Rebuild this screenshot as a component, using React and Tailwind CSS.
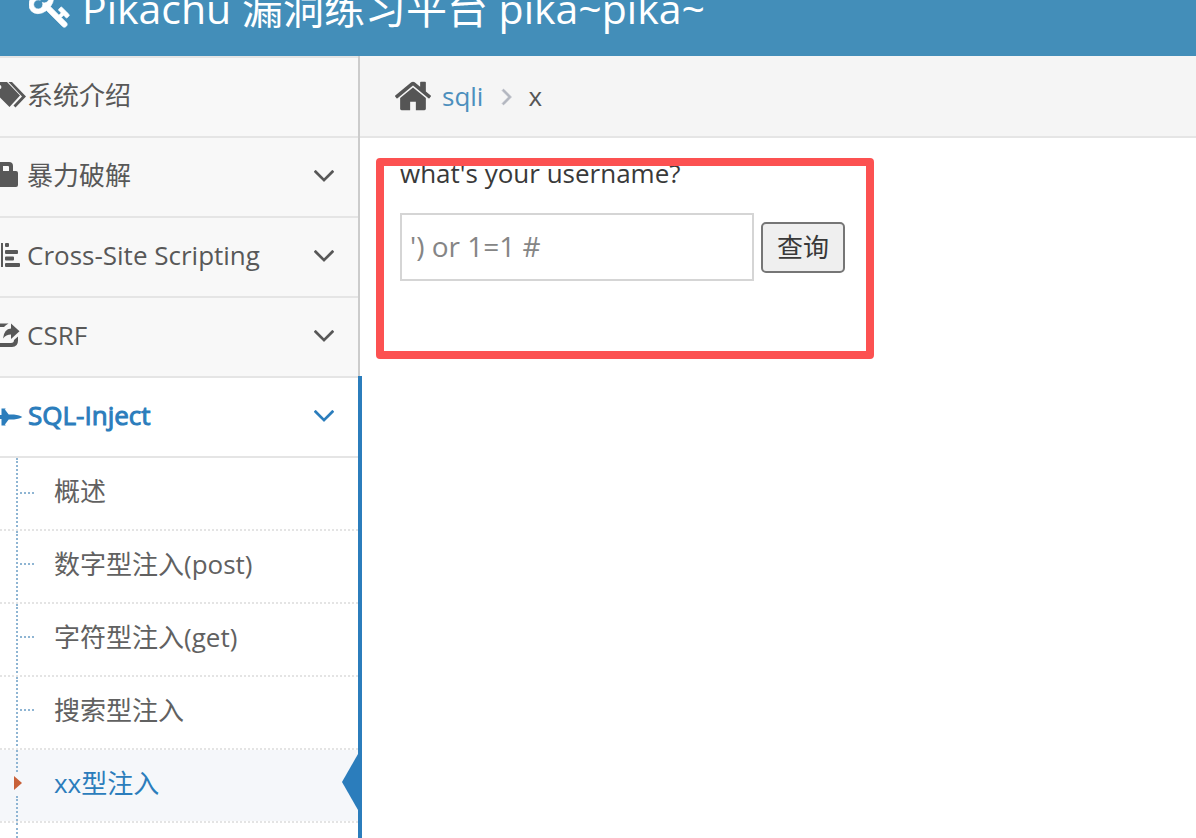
import clsx from 'clsx';

const menuItems = [
  { label: '系统介绍',             icon: 'tags'  },
  { label: '暴力破解',             icon: 'lock',  expandable: true },
  { label: 'Cross-Site Scripting', icon: 'align', expandable: true },
  { label: 'CSRF',                 icon: 'share', expandable: true },
  { label: 'SQL-Inject',           icon: 'plane', expandable: true, active: true },
];

const sqlItems = [
  { label: '概述' },
  { label: '数字型注入(post)' },
  { label: '字符型注入(get)' },
  { label: '搜索型注入' },
  { label: 'xx型注入', active: true },
];

/* ─── Menu glyphs, cut by the left edge of the window ─────────────────────── */
const glyphs = {
  tags: (
    <>
      <path fillRule="evenodd" d="M0 0h7l13 13.500L9.500 25 0 15.500zM-3 5a2.200 2.200 0 1 0 4.400 0a2.200 2.200 0 1 0-4.400 0z" />
      <path d="M8.500 0h3.500l14 14.500L15.500 25.500l-2-2 8.500-9z" />
    </>
  ),
  lock: <path fillRule="evenodd" d="M0 0h9q4 0 4 4v5h3q2 0 2 2v12q0 2-2 2H0zM3 4v5h6V5q0-1-1-1z" />,
  align: (
    <path d="M1 1h2v24H1zM6 1h2q1 0 1 1v2q0 1-1 1H6q-1 0-1-1V2q0-1 1-1zM6 8h11q1 0 1 1v2q0 1-1 1H6q-1 0-1-1V9q0-1 1-1zM6 14.500h7q1 0 1 1v2q0 1-1 1H6q-1 0-1-1v-2q0-1 1-1zM6 21h13q1 0 1 1v2q0 1-1 1H6q-1 0-1-1v-2q0-1 1-1z" />
  ),
  share: (
    <>
      <path d="M0 1.500h8.500q-3 1.500-4.500 3.500H0zM0 21h11q3 0 3-3l4-3.500v4q0 6.500-6 6.500H0z" />
      <path d="M11 1.500l8.500 7.700L11 17v-4.500q-5 0-8 4 1-9.500 8-10z" />
    </>
  ),
  plane: <path d="M1.500 6.500h4v.800h-.800l4 5.200h5.300q6 .7 8.300 2.500-2.300 1.800-8.300 2.500H8.700l-4 5.200h.8v.800h-4v-6.500H0v-4h1.500z" />,
};

const MenuGlyph = ({ name }) => (
  <svg viewBox="0 0 27 27" className="h-[27px] w-[27px] shrink-0 fill-current" aria-hidden="true">
    {glyphs[name]}
  </svg>
);

const AngleDown = () => (
  <svg viewBox="0 0 1792 1792" className="h-9 w-9 fill-current" aria-hidden="true">
    <path d="M1395 736q0 13-10 23l-466 466q-10 10-23 10t-23-10l-466-466q-10-10-10-23t10-23l50-50q10-10 23-10t23 10l393 393 393-393q10-10 23-10t23 10l50 50q10 10 10 23z" />
  </svg>
);

const AngleRight = () => (
  <svg viewBox="0 0 1792 1792" className="h-7 w-7 fill-[#b2b6bf] stroke-[#b2b6bf]" strokeWidth="40" aria-hidden="true">
    <path d="M1171 960q0 13-10 23l-466 466q-10 10-23 10t-23-10l-50-50q-10-10-10-23t10-23l393-393-393-393q-10-10-10-23t10-23l50-50q10-10 23-10t23 10l466 466q10 10 10 23z" />
  </svg>
);

const KeyIcon = () => (
  <svg viewBox="0 0 1792 1792" className="h-[43px] w-[43px] shrink-0 fill-white stroke-white" strokeWidth="30" aria-hidden="true">
    <path d="M832 512q0-80-56-136t-136-56-136 56-56 136q0 42 19 83-41-19-83-19-80 0-136 56t-56 136 56 136 136 56 136-56 56-136q0-42-19-83 41 19 83 19 80 0 136-56t56-136zm851 704q0 17-49 66t-66 49q-9 0-28.500-16t-36.500-33-38.500-40-24.500-26l-96 96 220 220q28 28 28 68 0 42-39 81t-81 39q-40 0-68-28l-671-671q-176 131-365 131-163 0-265.500-102.500t-102.500-265.500q0-160 95-313t248-248 313-95q163 0 265.500 102.500t102.500 265.500q0 189-131 365l355 355 96-96q-3-3-26-24.500t-40-38.500-33-36.500-16-28.500q0-17 49-66t66-49q13 0 23 10 6 6 46 44.500t82 79.500 86.500 86 73 78 28.500 41z" />
  </svg>
);

const HomeIcon = () => (
  <svg viewBox="0 0 1792 1792" className="h-10 w-10 fill-[#555]" aria-hidden="true">
    <path d="M1472 992v480q0 26-19 45t-45 19h-384v-384h-256v384h-384q-26 0-45-19t-19-45v-480q0-1 .5-3t.5-3l575-474 575 474q1 2 1 6zm223-69l-62 74q-8 9-21 11h-3q-13 0-21-7l-692-577-692 577q-12 8-24 7-13-2-21-11l-62-74q-8-10-7-23.500t11-21.500l719-599q32-26 76-26t76 26l244 204v-195q0-14 9-23t23-9h192q14 0 23 9t9 23v408l219 182q10 8 11 21.500t-7 23.500z" />
  </svg>
);

/* ─── Sidebar rows ────────────────────────────────────────────────────────── */
const MenuItem = ({ label, icon, expandable, active }) => (
  <a
    href="#"
    className={clsx(
      'flex h-20 items-center border-t-2 border-[#e5e5e5] pr-4 pb-1',
      active ? 'bg-white text-[#2b7dbc]' : 'bg-[#f8f8f8] text-[#585858]'
    )}
  >
    <MenuGlyph name={icon} />
    <span className={clsx('flex-1', active && 'pl-px [-webkit-text-stroke:1px]')}>{label}</span>
    {expandable && <AngleDown />}
  </a>
);

const SubItem = ({ label, active, first }) => (
  <li
    className={clsx(
      'relative border-t-2',
      first ? 'border-solid border-[#e5e5e5]' : 'border-dotted border-[#e4e4e4]'
    )}
  >
    <a
      href="#"
      className={clsx(
        'flex h-[71px] items-center pl-[54px] pb-1',
        active ? 'bg-[#f5f7fa] text-[#2b7dbc]' : 'bg-white text-[#616161]'
      )}
    >
      {label}
    </a>
    {active ? (
      <>
        <span className="absolute top-0 left-4 h-[22px] border-l-2 border-dotted border-[#8fb5d3]" />
        <span className="absolute bottom-0 left-4 h-[25px] border-l-2 border-dotted border-[#8fb5d3]" />
        <svg viewBox="0 0 8 14" className="absolute top-[26px] left-3.5 h-3.5 w-2 fill-[#c86139]" aria-hidden="true">
          <path d="M0 0l8 7-8 7z" />
        </svg>
        <svg viewBox="0 0 16 56" className="absolute top-1 right-0 h-14 w-4 fill-[#2b7dbc]" aria-hidden="true">
          <path d="M16 0v56L0 28z" />
        </svg>
      </>
    ) : (
      <>
        <span className="absolute -bottom-0.5 top-0 left-4 border-l-2 border-dotted border-[#8fb5d3]" />
        <span
          className={clsx(
            'absolute left-5 w-3.5 border-t-2 border-dotted border-[#8fb5d3]',
            first ? 'top-[34px]' : 'top-8'
          )}
        />
      </>
    )}
  </li>
);

const Sidebar = () => (
  <aside className="w-[360px] shrink-0 border-r-2 border-[#ccc]">
    <nav>
      <ul>
        {menuItems.map(({ label, icon, expandable, active }) => (
          <li key={label} className={clsx(active && 'relative')}>
            <MenuItem label={label} icon={icon} expandable={expandable} active={active} />
            {active && (
              <>
                <ul>
                  {sqlItems.map((item, i) => (
                    <SubItem key={item.label} label={item.label} active={item.active} first={i === 0} />
                  ))}
                  <li className="h-[17px] border-t-2 border-dotted border-[#e4e4e4] pl-4">
                    <span className="block h-full border-l-2 border-dotted border-[#8fb5d3]" />
                  </li>
                </ul>
                <span className="absolute inset-y-0 -right-1 w-1 bg-[#2b7dbc]" />
              </>
            )}
          </li>
        ))}
      </ul>
    </nav>
  </aside>
);

const Breadcrumbs = () => (
  <nav className="flex h-[82px] items-center border-b-2 border-[#e5e5e5] bg-[#f5f5f5] pl-[33px]">
    <HomeIcon />
    <a href="#" className="ml-[9px] text-[#4c8fbd]">sqli</a>
    <span className="ml-2.5 mr-[7px]"><AngleRight /></span>
    <span className="text-[#555]">x</span>
  </nav>
);

const QueryForm = () => (
  <form
    className="relative m-4 mt-5 h-[201px] w-[498px] px-6"
    onSubmit={(e) => e.preventDefault()}
  >
    <label htmlFor="username" className="block pb-[25px] leading-[30px] text-[#393939]">
      what's your username?
    </label>
    <div className="flex items-center gap-[7px]">
      <input
        id="username"
        name="name"
        type="text"
        defaultValue="') or 1=1 #"
        className="h-[68px] w-[354px] border-2 border-[#d5d5d5] px-2 pb-0.5 text-[28px] text-[#858585]"
      />
      <button
        type="submit"
        className="h-[51px] w-[84px] rounded-[5px] border-2 border-[#767676] bg-[#efefef] text-[#393939]"
      >
        查询
      </button>
    </div>
    <span className="pointer-events-none absolute inset-0 rounded-[4px] border-8 border-[#fc5151]" />
  </form>
);

export default function App() {
  return (
    <div className="h-screen overflow-hidden bg-white font-['Open_Sans','Noto_Sans_CJK_SC',sans-serif] text-[26px]">
      <header className="flex h-14 items-end overflow-hidden bg-[#438eb9] pl-[29px] pb-[27px]">
        <div className="flex items-center gap-2.5">
          <KeyIcon />
          <span className="text-[41px] leading-10 whitespace-nowrap text-white">
            Pikachu 漏洞练习平台 pika~pika~
          </span>
        </div>
      </header>
      <div className="flex">
        <Sidebar />
        <main className="min-w-0 flex-1">
          <Breadcrumbs />
          <QueryForm />
        </main>
      </div>
    </div>
  );
}
